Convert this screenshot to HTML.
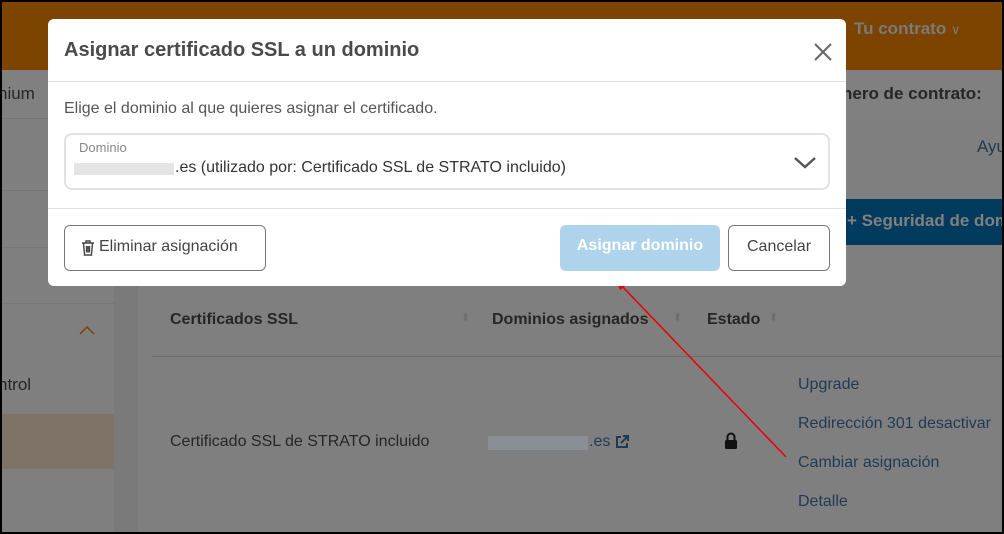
<!DOCTYPE html>
<html><head><meta charset="utf-8"><style>
*{box-sizing:border-box;margin:0;padding:0}
body{width:1004px;height:534px;overflow:hidden;position:relative;background:#000;font-family:"Liberation Sans",sans-serif}
#pg{position:absolute;left:2px;top:2px;width:1000px;height:530px;background:#7f7f7f;overflow:hidden}
.a{position:absolute;white-space:nowrap}
</style></head><body>
<div id="pg">
<div class="a" style="left:0;top:0;width:1000px;height:68px;background:#7d4400"></div>
<div class="a" style="left:0;top:68px;width:1000px;height:50px;background:#808080"></div>
<div class="a" style="left:0;top:116px;width:112px;height:1px;background:#767676"></div>
<div class="a" style="left:0;top:188px;width:112px;height:1px;background:#767676"></div>
<div class="a" style="left:0;top:245px;width:112px;height:1px;background:#767676"></div>
<div class="a" style="left:0;top:301px;width:112px;height:1px;background:#767676"></div>
<div class="a" style="left:112px;top:118px;width:24px;height:420px;background:#7a7a7a"></div>
<div class="a" style="left:0;top:412px;width:112px;height:55px;background:#7f7367"></div>
<div class="a" style="left:-4px;top:82px;font-size:17px;color:#262626">nium</div>
<div class="a" style="left:-4px;top:373px;font-size:17px;color:#262626">ntrol</div>
<svg class="a" style="left:77px;top:323px" width="16" height="10"><path d="M1 9L8 2L15 9" stroke="#7d4400" stroke-width="1.5" fill="none"/></svg>
<div class="a" style="left:852px;top:17px;font-size:17px;font-weight:bold;color:#7a7a7a">Tu contrato <span style="font-weight:normal;font-size:13px">∨</span></div>
<div class="a" style="left:840px;top:82px;font-size:17px;font-weight:bold;color:#262626">nero de contrato:</div>
<div class="a" style="left:975px;top:135px;font-size:17px;color:#1f3a55">Ayu</div>
<div class="a" style="left:841px;top:197px;width:160px;height:46px;background:#003a5d;color:#808080;font-size:17px;font-weight:bold;padding:12px 0 0 4px">+ Seguridad de domi</div>
<div class="a" style="left:150px;top:354px;width:850px;height:1px;background:#6e6e6e"></div>
<div class="a" style="left:168px;top:309px;font-size:16px;font-weight:bold;color:#262626">Certificados SSL</div>
<div class="a" style="left:459px;top:309px;font-size:11px;color:#6e6e6e">⬍</div>
<div class="a" style="left:490px;top:309px;font-size:16px;font-weight:bold;color:#262626">Dominios asignados</div>
<div class="a" style="left:671px;top:309px;font-size:11px;color:#6e6e6e">⬍</div>
<div class="a" style="left:705px;top:309px;font-size:16px;font-weight:bold;color:#262626">Estado</div>
<div class="a" style="left:767px;top:309px;font-size:11px;color:#6e6e6e">⬍</div>
<div class="a" style="left:168px;top:431px;font-size:16px;color:#262626">Certificado SSL de STRATO incluido</div>
<div class="a" style="left:486px;top:434px;width:100px;height:14px;background:#8a8f96"></div>
<div class="a" style="left:587px;top:431px;font-size:16px;color:#1f3a55">.es</div>
<svg class="a" style="left:613px;top:433px" width="14" height="14"><path d="M6 2H2V12H12V8M8 1H13V6M13 1L6 8" stroke="#1f3a55" stroke-width="2" fill="none"/></svg>
<svg class="a" style="left:722px;top:430px" width="14" height="18"><path d="M3.5 8V5a3.5 3.5 0 0 1 7 0V8" stroke="#111" stroke-width="2" fill="none"/><rect x="1" y="8" width="12" height="9" rx="1.5" fill="#111"/></svg>
<div class="a" style="left:796px;top:363px;font-size:16px;color:#1f3a55;line-height:39px">Upgrade<br>Redirección 301 desactivar<br>Cambiar asignación<br>Detalle</div>
<svg class="a" style="left:0;top:0" width="1000" height="530"><line x1="784" y1="455" x2="616" y2="280" stroke="#e00" stroke-width="1.5"/><polygon points="612,276 626,282 618,288" fill="#e00"/></svg>

<div class="a" style="left:46px;top:17px;width:798px;height:267px;background:#fff;border-radius:6px">
<div class="a" style="left:16px;top:20px;font-size:20px;font-weight:bold;color:#4a4a4a">Asignar certificado SSL a un dominio</div>
<svg class="a" style="left:766px;top:24px" width="18" height="18"><path d="M1 1L17 17M17 1L1 17" stroke="#666" stroke-width="2"/></svg>
<div class="a" style="left:0;top:62px;width:798px;height:1px;background:#e0e0e0"></div>
<div class="a" style="left:16px;top:81px;font-size:16px;color:#555">Elige el dominio al que quieres asignar el certificado.</div>
<div class="a" style="left:16px;top:114px;width:766px;height:57px;border:2px solid #e2e2e2;border-radius:8px">
<div class="a" style="left:13px;top:5px;font-size:13px;color:#888">Dominio</div>
<div class="a" style="left:8px;top:28px;width:100px;height:12px;background:#e4e4e4"></div>
<div class="a" style="left:109px;top:24px;font-size:16px;color:#333">.es (utilizado por: Certificado SSL de STRATO incluido)</div>
<svg class="a" style="left:728px;top:21px" width="22" height="14"><path d="M1 2L11 11L21 2" stroke="#555" stroke-width="2.5" fill="none"/></svg>
</div>
<div class="a" style="left:0;top:189px;width:798px;height:1px;background:#e0e0e0"></div>
<div class="a" style="left:16px;top:206px;width:202px;height:46px;border:1px solid #777;border-radius:6px;font-size:16px;color:#444;padding:12px 0 0 34px">Eliminar asignación</div>
<svg class="a" style="left:33px;top:221px" width="14" height="16"><path d="M1 3H13M5 3V1H9V3M2.5 3L3.5 15H10.5L11.5 3M5.5 6V12.5M7 6V12.5M8.5 6V12.5" stroke="#444" stroke-width="1.4" fill="none"/></svg>
<div class="a" style="left:512px;top:206px;width:160px;height:46px;background:#aed3ea;border-radius:6px;font-size:16px;font-weight:bold;color:#fff;text-align:center;padding-top:12px">Asignar dominio</div>
<div class="a" style="left:680px;top:206px;width:102px;height:46px;border:1px solid #777;border-radius:6px;font-size:16px;color:#444;text-align:center;padding-top:12px">Cancelar</div>
</div>
</div>
</body></html>
